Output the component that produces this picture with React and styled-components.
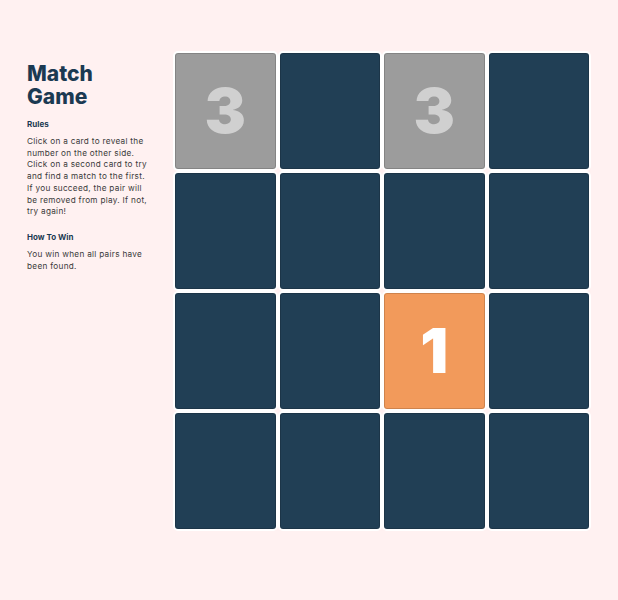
import styled, { createGlobalStyle } from "styled-components";

const GlobalStyle = createGlobalStyle`
  body {
    margin: 0;
    background-color: #fff1f1;
    font-family: Inter, "Liberation Sans", sans-serif;
  }
`;

const Page = styled.div`
  display: flex;
  align-items: flex-start;
  padding: 51px 0 0 27px;
`;

const Sidebar = styled.aside`
  width: 123px;
  margin-right: 23px;
  padding-top: 11px;
`;

const Title = styled.h1`
  margin: 0 0 11px;
  font: 800 21px/23px Inter, sans-serif;
  color: #1b3a52;
`;

const Heading = styled.h2`
  margin: 0 0 6px;
  font: 700 8px/11px Inter, sans-serif;
  color: #1b3a52;
`;

const Text = styled.p`
  margin: 0 0 14px;
  font-size: 8.2px;
  line-height: 11.7px;
  letter-spacing: 0.3px;
  color: #3a3a3a;
`;

const Board = styled.div`
  display: grid;
  grid-template-columns: repeat(4, 104.5px);
  grid-auto-rows: 120px;
`;

const colors = {
  hidden: "#213f55",
  matched: "#9c9c9c",
  active: "#f29a5b",
};

const Card = styled.div`
  display: flex;
  align-items: center;
  justify-content: center;
  border: 2px solid #fff;
  border-radius: 5px;
  box-shadow: inset 0 0 0 1px rgba(0, 0, 0, 0.15);
  background-color: ${(props) => colors[props.$state]};
  color: ${(props) => (props.$state === "active" ? "#fff" : "#d0d0d0")};
  font: 900 62px/1 Inter, "Liberation Sans", sans-serif;
`;

const cards = [
  { state: "matched", value: 3 },
  { state: "hidden" },
  { state: "matched", value: 3 },
  { state: "hidden" },
  { state: "hidden" },
  { state: "hidden" },
  { state: "hidden" },
  { state: "hidden" },
  { state: "hidden" },
  { state: "hidden" },
  { state: "active", value: 1 },
  { state: "hidden" },
  { state: "hidden" },
  { state: "hidden" },
  { state: "hidden" },
  { state: "hidden" },
];

export default function App() {
  return (
    <>
      <GlobalStyle />
      <Page>
        <Sidebar>
          <Title>
            Match
            <br />
            Game
          </Title>
          <Heading>Rules</Heading>
          <Text>
            Click on a card to reveal the number on the other side. Click on a
            second card to try and find a match to the first. If you succeed,
            the pair will be removed from play. If not, try again!
          </Text>
          <Heading>How To Win</Heading>
          <Text>You win when all pairs have been found.</Text>
        </Sidebar>
        <Board>
          {cards.map((card, i) => (
            <Card key={i} $state={card.state}>
              {card.value}
            </Card>
          ))}
        </Board>
      </Page>
    </>
  );
}
